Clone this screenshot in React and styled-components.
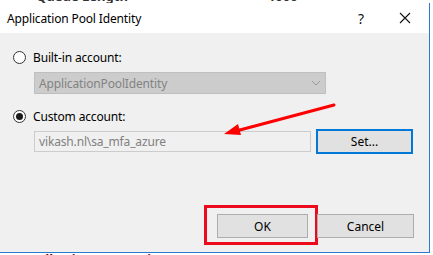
import React from 'react'
import styled, { createGlobalStyle } from 'styled-components'

const Global = createGlobalStyle`
	html, body { margin: 0; padding: 0; background: #ffffff; }
	body { font-family: 'Noto Sans', 'Open Sans', sans-serif; }
`

const Page = styled.div`
	width: 433px;
	height: 255px;
	overflow: hidden;
	display: flex;
	flex-direction: column;
	background: #ffffff;
	position: relative;
`

const Strip = styled.div`
	height: ${p => p.h}px;
	overflow: hidden;
	display: flex;
	align-items: ${p => (p.top ? 'flex-start' : 'flex-end')};
	gap: 40px;
	padding-left: 36px;
	font-size: 13px;
	line-height: 13px;
	color: ${p => p.color || '#222'};
	font-weight: bold;
	white-space: nowrap;
`

const Dialog = styled.div`
	width: 429px;
	flex: 1;
	display: flex;
	flex-direction: column;
	border-right: 1px solid #2b79d0;
	border-bottom: 1px solid #2b79d0;
	background: #f0f0f0;
`

const TitleBar = styled.div`
	height: 30px;
	background: #ffffff;
	display: flex;
	align-items: center;
	padding-left: 7px;
	padding-right: 4px;
	font-size: 12px;
	color: #000;
`

const Title = styled.span`
	flex: 1;
	letter-spacing: -0.15px;
`

const TitleIcon = styled.span`
	width: 40px;
	display: flex;
	justify-content: center;
	font-size: 14px;
	color: #111;
	margin-left: ${p => p.gap || 0}px;
`

const Body = styled.div`
	flex: 1;
	position: relative;
	padding: 16px 0 0 13px;
	display: flex;
	flex-direction: column;
	font-size: 12px;
	color: #000;
`

const RadioRow = styled.label`
	display: flex;
	align-items: center;
	gap: 7px;
	height: 16px;
	margin-top: ${p => p.mt || 0}px;
	letter-spacing: -0.15px;
`

const Radio = styled.span`
	width: 11px;
	height: 11px;
	border: 1px solid #333;
	border-radius: 50%;
	background: #fff;
	display: flex;
	align-items: center;
	justify-content: center;
	&::after {
		content: '';
		width: 7px;
		height: 7px;
		border-radius: 50%;
		background: ${p => (p.checked ? '#1a1a1a' : 'transparent')};
	}
`

const Combo = styled.div`
	margin: 7px 0 0 21px;
	width: 286px;
	height: 20px;
	background: #cccccc;
	border: 1px solid #bfbfbf;
	display: flex;
	align-items: center;
	padding-left: 4px;
	color: #838383;
	box-sizing: content-box;
	letter-spacing: -0.15px;
	svg { margin-left: auto; margin-right: 4px; }
`

const FieldRow = styled.div`
	display: flex;
	align-items: center;
	margin: 5px 0 0 21px;
	gap: 5px;
`

const Field = styled.div`
	width: 271px;
	height: 19px;
	border: 1px solid #cccccc;
	padding-left: 4px;
	display: flex;
	align-items: center;
	color: #808080;
	letter-spacing: -0.15px;
`

const Button = styled.button`
	width: ${p => p.w || 97}px;
	height: ${p => p.h || 24}px;
	background: #e1e1e1;
	border: ${p => (p.primary ? '2px solid #0078d7' : '1px solid #adadad')};
	font-family: inherit;
	font-size: 12px;
	color: #000;
	padding: 0;
	display: flex;
	align-items: center;
	justify-content: center;
`

const Footer = styled.div`
	margin-top: auto;
	margin-bottom: 14px;
	display: flex;
	justify-content: flex-end;
	padding-right: 15px;
	gap: 9px;
`

const Highlight = styled.div`
	border: 3px solid #ec0a1e;
	padding: 6px 7px 4px 10px;
	margin: -9px -10px -7px 0;
	display: flex;
`

const Arrow = styled.svg`
	position: absolute;
	left: 0;
	top: 0;
	pointer-events: none;
`

export default function App() {
	return (
		<Page>
			<Global />
			<Strip h={3} color="#333">
				<span>Queue Length</span>
				<span style={{ marginLeft: 100 }}>1000</span>
			</Strip>
			<Dialog>
				<TitleBar>
					<Title>Application Pool Identity</Title>
					<TitleIcon>?</TitleIcon>
					<TitleIcon gap={4}>
						<svg width="12" height="12" viewBox="0 0 12 12">
							<path d="M1 1L11 11M11 1L1 11" stroke="#111" strokeWidth="1.1" />
						</svg>
					</TitleIcon>
				</TitleBar>
				<Body>
					<RadioRow>
						<Radio />
						Built-in account:
					</RadioRow>
					<Combo>
						ApplicationPoolIdentity
						<svg width="10" height="6" viewBox="0 0 10 6">
							<path d="M1 1L5 5L9 1" fill="none" stroke="#9a9a9a" strokeWidth="1" />
						</svg>
					</Combo>
					<RadioRow mt={14}>
						<Radio checked />
						Custom account:
					</RadioRow>
					<FieldRow>
						<Field>vikash.nl\sa_mfa_azure</Field>
						<Button primary w={97} h={25}>Set...</Button>
					</FieldRow>
					<Footer>
						<Highlight>
							<Button w={91}>OK</Button>
						</Highlight>
						<Button w={97}>Cancel</Button>
					</Footer>
				</Body>
			</Dialog>
			<Strip h={2} top color="#8b0000">
				<span>Idle Time-out Action</span>
			</Strip>
			<Arrow width="433" height="255" viewBox="0 0 433 255">
				<path d="M334 105L236 131" stroke="#f00" strokeWidth="3" strokeLinecap="round" />
				<path d="M224 134L238 124L241 135Z" fill="#f00" />
			</Arrow>
		</Page>
	)
}
